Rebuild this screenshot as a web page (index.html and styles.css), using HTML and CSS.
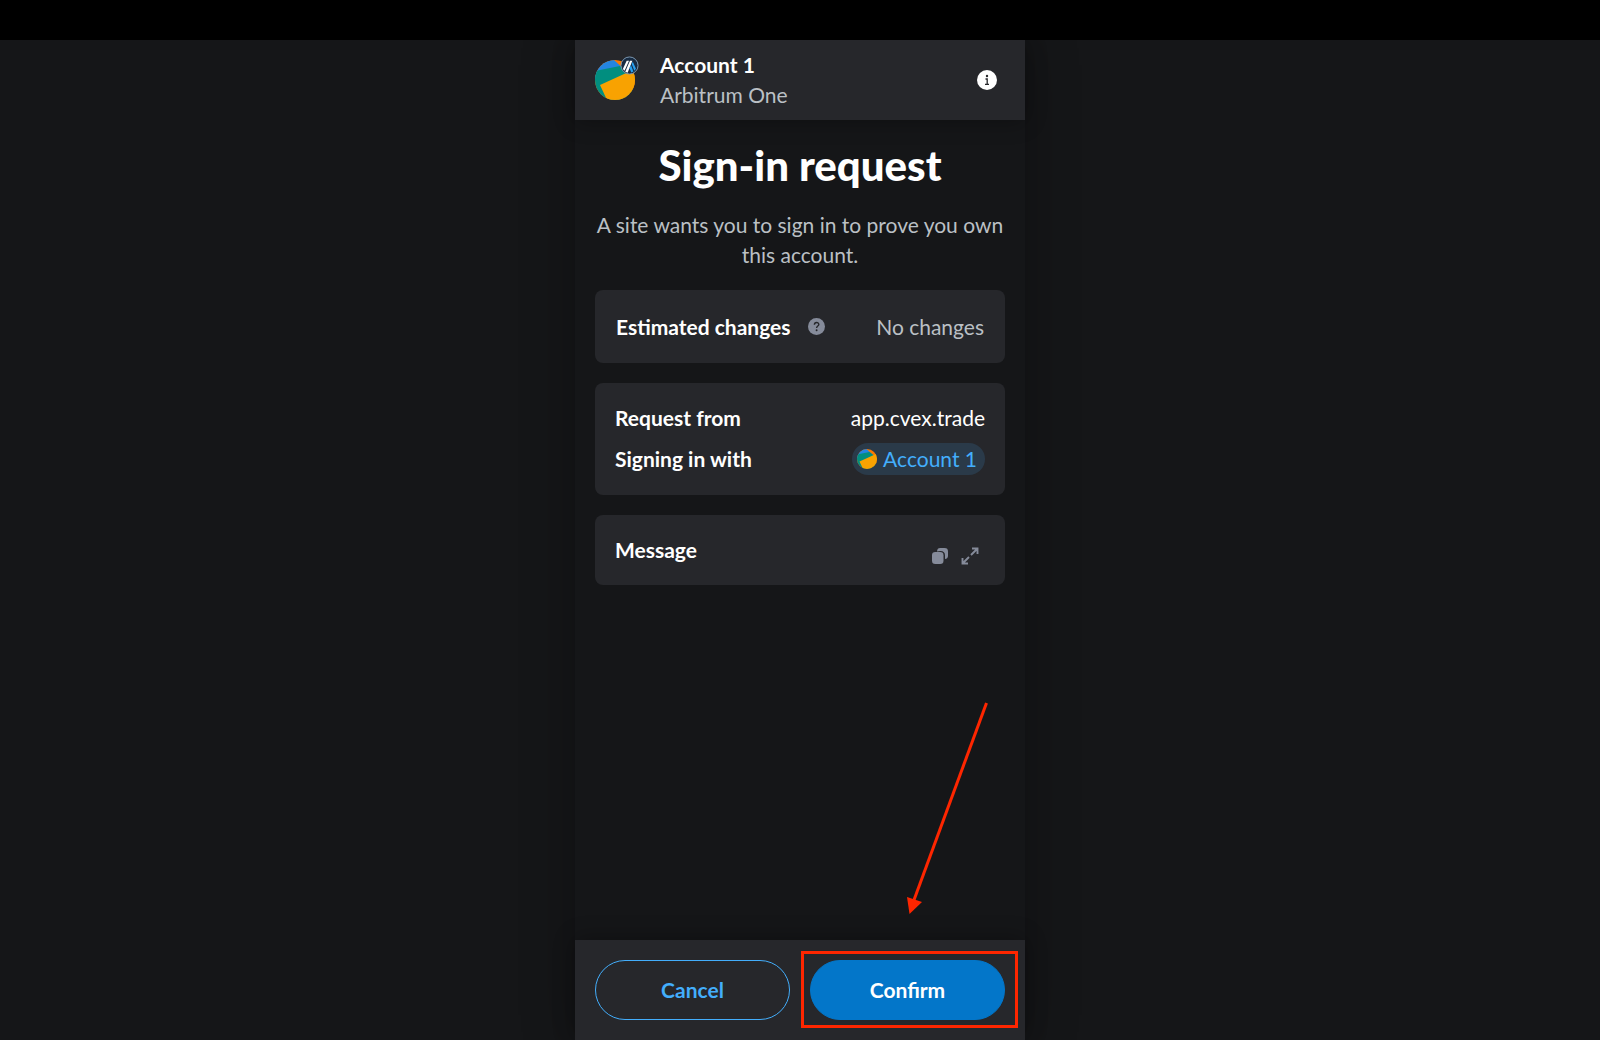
FILE: index.html
```html
<!DOCTYPE html>
<html lang="en">
<head>
    <meta charset="UTF-8">
    <meta name="viewport" content="width=device-width, initial-scale=1.0">
    <title>Sign-in request</title>
    <link rel="stylesheet" href="styles.css">
</head>
<body>
    <!-- shared account avatar -->
    <svg width="0" height="0" class="defs" aria-hidden="true">
        <defs>
            <clipPath id="circle"><circle cx="20" cy="20" r="20"/></clipPath>
            <symbol id="avatar" viewBox="0 0 40 40">
                <g clip-path="url(#circle)">
                    <rect width="40" height="40" fill="#fa7900"/>
                    <path d="M0 0H19L32 12 0 20z" fill="#2485e1"/>
                    <path d="M0 11 25 6 34 13 40 40H0z" fill="#018e7f"/>
                    <path d="M5 25 40 9V40H12z" fill="#f8a201"/>
                </g>
            </symbol>
        </defs>
    </svg>

    <div class="topbar"></div>
    <div class="popup">
        <header class="header">
            <div class="avatar">
                <svg class="avatar-img" aria-hidden="true"><use href="#avatar"/></svg>
                <svg class="network-badge" viewBox="0 0 20 20" aria-hidden="true">
                    <circle cx="10" cy="10" r="9" fill="#182b42" stroke="#7f9db8"/>
                    <path d="M10.500 5H13L8 17.500 5.500 16.500z" fill="#fff"/>
                    <path d="M7 5h2.500L4.800 15.500 3 13.800z" fill="#fff"/>
                    <path d="M12.300 8.500 13.500 6l3.300 7.500-1.700 2z" fill="#28a0f0"/>
                    <path d="M10 13l1.500-3.500 2.600 6.800-2.200 1z" fill="#28a0f0"/>
                </svg>
            </div>
            <div class="account">
                <div class="account-name">Account 1</div>
                <div class="account-network">Arbitrum One</div>
            </div>
            <button class="icon-btn info-btn" aria-label="Account details">
                <svg width="20" height="20" viewBox="0 0 20 20">
                    <circle cx="10" cy="10" r="10" fill="#fff"/>
                    <circle cx="10" cy="6" r="1.200" fill="#26272b"/>
                    <path d="M8.500 9h1.700v5M8 14.300h4" fill="none" stroke="#26272b" stroke-width="1.300"/>
                </svg>
            </button>
        </header>

        <main class="content">
            <h1>Sign-in request</h1>
            <p class="description">A site wants you to sign in to prove you own this account.</p>

            <section class="card card-changes">
                <div class="row">
                    <span class="label">Estimated changes</span>
                    <button class="icon-btn help-btn" aria-label="About estimated changes">
                        <svg width="17" height="17" viewBox="0 0 16 16">
                            <circle cx="8" cy="8" r="8" fill="#858b9a"/>
                            <path d="M6 6.300c0-2.800 4.200-2.700 4.200-.2 0 1.500-2.100 1.500-2.100 3.200" fill="none" stroke="#26272b" stroke-width="1.300"/>
                            <circle cx="8.100" cy="11.500" r=".9" fill="#26272b"/>
                        </svg>
                    </button>
                    <span class="value muted">No changes</span>
                </div>
            </section>

            <section class="card">
                <div class="row">
                    <span class="label">Request from</span>
                    <span class="value">app.cvex.trade</span>
                </div>
                <div class="row">
                    <span class="label">Signing in with</span>
                    <button class="account-pill">
                        <svg class="pill-avatar" aria-hidden="true"><use href="#avatar"/></svg>
                        Account 1
                    </button>
                </div>
            </section>

            <section class="card">
                <div class="row">
                    <span class="label">Message</span>
                    <div class="message-actions">
                        <button class="icon-btn" aria-label="Copy message">
                            <svg width="18" height="18" viewBox="0 0 18 18" fill="#858b9a">
                                <path d="M6 4.500C6.200 2 7.200 1 9.200 1h4.300C16 1 17 2 17 4.500v4.300c0 2-1 3-3 3.200V8.500C14 5.500 12.500 4 9.500 4z"/>
                                <rect x="1" y="5" width="11.500" height="12" rx="3.300"/>
                            </svg>
                        </button>
                        <button class="icon-btn" aria-label="Expand message">
                            <svg width="18" height="18" viewBox="0 0 18 18" fill="none" stroke="#858b9a" stroke-width="1.900">
                                <path d="M11 1.500h5.500V7M16.500 1.500 10 8M1.500 11v5.500H7M1.500 16.500 8 10"/>
                            </svg>
                        </button>
                    </div>
                </div>
            </section>
        </main>

        <footer class="footer">
            <button class="btn btn-secondary">Cancel</button>
            <div class="confirm">
                <button class="btn btn-primary">Confirm</button>
                <div class="highlight"></div>
                <svg class="arrow" viewBox="0 0 90 220" aria-hidden="true">
                    <path d="M81.500 3 9 200" stroke="#fe2600" stroke-width="3"/>
                    <path d="M2 197 17 202 4.500 214z" fill="#fe2600"/>
                </svg>
            </div>
        </footer>
    </div>
</body>
</html>
```
FILE: styles.css
```css
* {
    box-sizing: border-box;
}
body {
    margin: 0;
    min-height: 100vh;
    display: flex;
    flex-direction: column;
    align-items: center;
    background-color: #151618;
    color: #fff;
    font-family: Lato, "Liberation Sans", sans-serif;
    font-size: 21px;
    line-height: 30px;
}
button {
    font: inherit;
    cursor: pointer;
}
svg {
    display: block;
}
.defs {
    position: absolute;
}
.topbar {
    width: 100%;
    height: 40px;
    background-color: #000;
    z-index: 1;
}
.popup {
    flex: 1;
    display: flex;
    flex-direction: column;
    width: 100%;
    max-width: 450px;
    background-color: #151618;
    box-shadow: 0 0 50px rgba(0, 0, 0, 0.3);
}

/* header */
.header {
    display: flex;
    align-items: center;
    gap: 25px;
    padding: 10px 28px 10px 20px;
    background-color: #26272b;
    box-shadow: 0 2px 20px rgba(0, 0, 0, 0.3);
}
.avatar {
    position: relative;
}
.avatar-img {
    width: 40px;
    height: 40px;
}
.network-badge {
    position: absolute;
    top: -4px;
    right: -4px;
    width: 19px;
    height: 19px;
}
.account {
    flex: 1;
}
.account-name,
.label {
    font-weight: bold;
}
.account-network,
.description,
.muted {
    color: #bbc0c5;
}
.icon-btn {
    padding: 0;
    border: none;
    background: none;
}

/* request details */
.content {
    flex: 1;
    display: flex;
    flex-direction: column;
    gap: 20px;
    padding: 20px;
}
h1 {
    margin: 0;
    font-size: 42px;
    font-weight: 900;
    line-height: 50px;
    text-align: center;
}
.description {
    margin: 0;
    text-align: center;
}
.card {
    display: flex;
    flex-direction: column;
    gap: 10px;
    padding: 20px;
    border-radius: 8px;
    background-color: #26272b;
}
.card-changes {
    justify-content: center;
    min-height: 73px;
    padding: 21px;
}
.row {
    display: flex;
    align-items: center;
}
.value,
.account-pill,
.message-actions {
    margin-left: auto;
}
.help-btn {
    margin-left: 17px;
}
.account-pill {
    display: flex;
    align-items: center;
    gap: 6px;
    height: 32px;
    padding: 0 8px 0 5px;
    border: none;
    border-radius: 16px;
    background-color: #2a3a49;
    color: #43aefc;
}
.pill-avatar {
    width: 20px;
    height: 20px;
}
.message-actions {
    display: flex;
    align-self: flex-end;
    gap: 12px;
    padding-right: 6px;
}

/* footer */
.footer {
    display: grid;
    grid-template-columns: 1fr 1fr;
    gap: 20px;
    padding: 20px;
    background-color: #26272b;
    box-shadow: 0 -2px 20px rgba(0, 0, 0, 0.3);
}
.confirm {
    position: relative;
}
.btn {
    width: 100%;
    height: 60px;
    border: 1px solid #43aefc;
    border-radius: 30px;
    font-weight: bold;
}
.btn-secondary {
    background: none;
    color: #43aefc;
}
.btn-primary {
    border-color: #0376c9;
    background-color: #0376c9;
    color: #fff;
}
.highlight {
    position: absolute;
    inset: -9px -13px -8px -9px;
    border: 3px solid #fe2600;
    pointer-events: none;
}
.arrow {
    position: absolute;
    right: 10px;
    bottom: 100px;
    width: 90px;
    height: 220px;
    pointer-events: none;
}
```
